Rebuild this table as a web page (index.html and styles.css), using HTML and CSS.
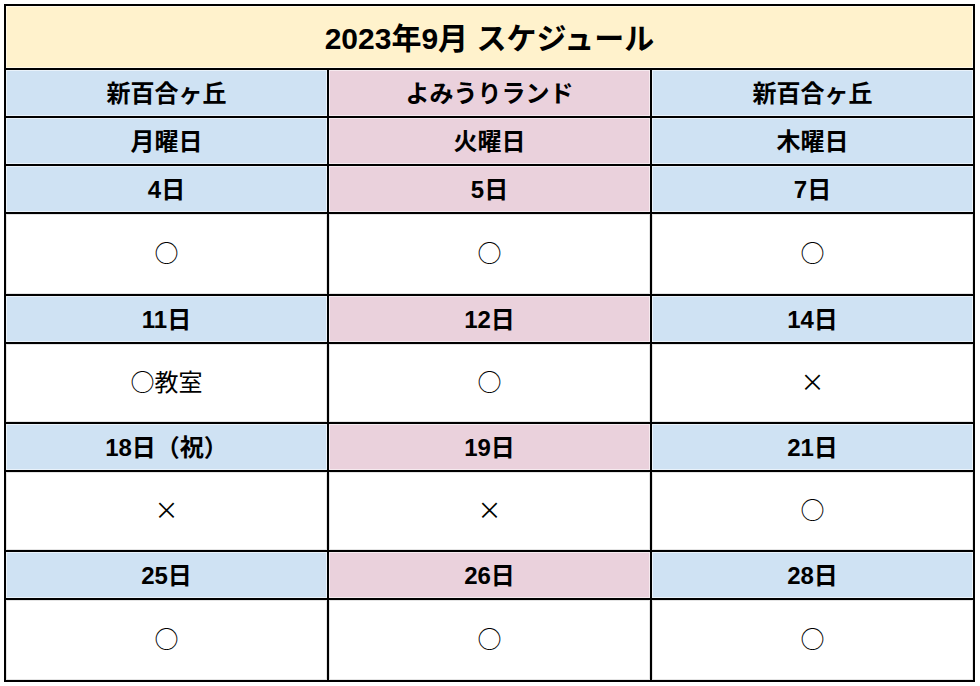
FILE: index.html
```html
<!DOCTYPE html>
<html lang="ja">
<head>
<meta charset="utf-8">
<title>2023年9月 スケジュール</title>
<link rel="stylesheet" href="styles.css">
</head>
<body>
<div class="sheet">
  <div class="cell title">2023年9月 スケジュール</div>

  <div class="cell head blue">新百合ヶ丘</div>
  <div class="cell head pink">よみうりランド</div>
  <div class="cell head blue">新百合ヶ丘</div>

  <div class="cell head blue">月曜日</div>
  <div class="cell head pink">火曜日</div>
  <div class="cell head blue">木曜日</div>

  <div class="cell head blue">4日</div>
  <div class="cell head pink">5日</div>
  <div class="cell head blue">7日</div>

  <div class="cell data">○</div>
  <div class="cell data">○</div>
  <div class="cell data">○</div>

  <div class="cell head blue">11日</div>
  <div class="cell head pink">12日</div>
  <div class="cell head blue">14日</div>

  <div class="cell data">○教室</div>
  <div class="cell data">○</div>
  <div class="cell data">×</div>

  <div class="cell head blue">18日（祝）</div>
  <div class="cell head pink">19日</div>
  <div class="cell head blue">21日</div>

  <div class="cell data">×</div>
  <div class="cell data">×</div>
  <div class="cell data">○</div>

  <div class="cell head blue">25日</div>
  <div class="cell head pink">26日</div>
  <div class="cell head blue">28日</div>

  <div class="cell data">○</div>
  <div class="cell data">○</div>
  <div class="cell data">○</div>
</div>
</body>
</html>
```

FILE: styles.css
```css
html, body {
  margin: 0;
  background: #ffffff;
}

body {
  padding: 4px;
  font-family: "Liberation Sans", "Noto Sans CJK JP", sans-serif;
  color: #000000;
}

.sheet {
  width: 971px;
  box-sizing: border-box;
  display: grid;
  grid-template-columns: 321px 321px 321px;
  grid-template-rows: 62px 46px 46px 46px 80px 46px 78px 46px 78px 46px 80px;
  gap: 2px;
  padding: 2px;
  background: #000000;
}

.cell {
  display: flex;
  align-items: center;
  justify-content: center;
  white-space: nowrap;
  box-sizing: border-box;
}

.title {
  grid-column: 1 / 4;
  background: #fff2cc;
  font-size: 30px;
  font-weight: bold;
  padding-bottom: 3px;
  box-shadow: inset 0 0 0 1px rgba(255, 255, 255, 0.55);
}

.head {
  font-size: 24px;
  font-weight: bold;
  padding-bottom: 4px;
  box-shadow: inset 0 0 0 1px rgba(255, 255, 255, 0.55);
}

.blue {
  background: #cfe2f3;
}

.pink {
  background: #ead1dc;
}

.data {
  background: #ffffff;
  font-family: "Noto Sans CJK JP", sans-serif;
  font-size: 24px;
  padding-bottom: 6px;
  box-shadow: inset 0 0 0 1px #e4e4e4;
}
```
